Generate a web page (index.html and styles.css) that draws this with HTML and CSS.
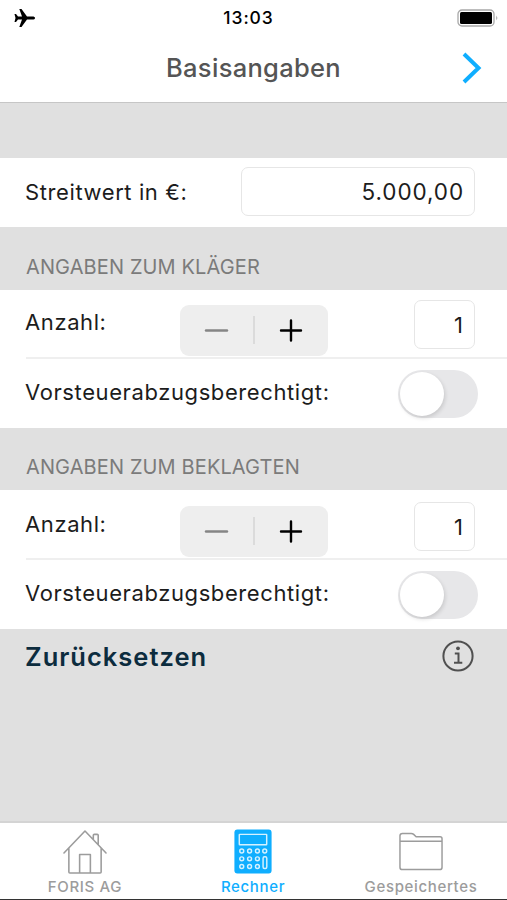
FILE: index.html
```html
<!DOCTYPE html>
<html lang="de">
<head>
  <meta charset="UTF-8" />
  <meta name="viewport" content="width=device-width, initial-scale=1.0"/>
  <title>Basisangaben</title>
  <link rel="stylesheet" href="styles.css">
</head>
<body>
  <div class="app">
    <div class="status-bar">
      <svg class="plane" width="22" height="20" viewBox="0 0 22 20">
        <path d="M21 10c0-1-1-1.500-2.500-1.500H13L7.500 1H5.300L8 8.500H4L2 6H.5L1.500 10 .5 14H2l2-2.500h4L5.300 19h2.200L13 11.500h5.500C20 11.500 21 11 21 10z"/>
      </svg>
      <span class="time">13:03</span>
      <svg class="battery" width="42" height="18" viewBox="0 0 42 18">
        <rect x="1" y="1" width="36" height="16" rx="4" fill="none" stroke="#a8a8a8" stroke-width="1.300"/>
        <rect x="3" y="3" width="32" height="12" rx="1.500"/>
        <path d="M39.500 6.500q1.600 2.500 0 5z" fill="#777"/>
      </svg>
    </div>

    <header class="nav-bar">
      <h1>Basisangaben</h1>
      <svg class="next" width="22" height="32" viewBox="0 0 22 32">
        <path d="M3 2l14.500 14L3 30" fill="none" stroke="#0faeff" stroke-width="4"/>
      </svg>
    </header>

    <main>
      <div class="row amount">
        <label>Streitwert in €:</label>
        <div class="field wide">5.000,00</div>
      </div>

      <h2 class="first">ANGABEN ZUM KLÄGER</h2>
      <div class="group">
        <div class="row count">
          <label>Anzahl:</label>
          <div class="stepper">
            <svg width="148" height="51" viewBox="0 0 148 51">
              <path d="M26 25.500h21" stroke="#858585" stroke-width="2.400" stroke-linecap="round"/>
              <path d="M74 11v28" stroke="#d5d5d5" stroke-width="1.500"/>
              <path d="M101 25.500h20M111 15.500v20" stroke="#000" stroke-width="2.400" stroke-linecap="round"/>
            </svg>
          </div>
          <div class="field small">1</div>
        </div>
        <div class="row tax">
          <label>Vorsteuerabzugsberechtigt:</label>
          <div class="toggle"><span class="knob"></span></div>
        </div>
      </div>

      <h2 class="second">ANGABEN ZUM BEKLAGTEN</h2>
      <div class="group">
        <div class="row count lower">
          <label>Anzahl:</label>
          <div class="stepper">
            <svg width="148" height="51" viewBox="0 0 148 51">
              <path d="M26 25.500h21" stroke="#858585" stroke-width="2.400" stroke-linecap="round"/>
              <path d="M74 11v28" stroke="#d5d5d5" stroke-width="1.500"/>
              <path d="M101 25.500h20M111 15.500v20" stroke="#000" stroke-width="2.400" stroke-linecap="round"/>
            </svg>
          </div>
          <div class="field small">1</div>
        </div>
        <div class="row tax">
          <label>Vorsteuerabzugsberechtigt:</label>
          <div class="toggle"><span class="knob"></span></div>
        </div>
      </div>

      <div class="reset">
        <span>Zurücksetzen</span>
        <svg width="34" height="34" viewBox="0 0 34 34" fill="none" stroke="#505050">
          <circle cx="17" cy="17" r="14.600" stroke-width="2"/>
          <circle cx="17" cy="9.300" r="1.900" fill="#505050" stroke="none"/>
          <path d="M13.800 14.500h3.700v9M13 23.800h8.300" stroke-width="2"/>
        </svg>
      </div>
    </main>

    <nav class="tab-bar">
      <div class="tab">
        <svg width="46" height="46" viewBox="0 0 46 46" fill="none" stroke="#9c9c9c" stroke-width="1.600" stroke-linejoin="round" stroke-linecap="round">
          <path d="M1.500 24.500L23 2l21.500 22.500M6.500 19.500V44a1 1 0 0 0 1 1h31a1 1 0 0 0 1-1V19.500M17.500 45V26h11v19M31.500 11V6.500a1 1 0 0 1 1-1h3a1 1 0 0 1 1 1V16"/>
        </svg>
        <span>FORIS AG</span>
      </div>
      <div class="tab active">
        <svg width="46" height="46" viewBox="0 0 46 46" fill="none" stroke="#d5f1ff" stroke-width="1.500">
          <rect x="4" y="0.500" width="38" height="45" rx="3" fill="#0faeff" stroke="none"/>
          <rect x="9" y="5.500" width="28" height="10.500" rx="0.500"/>
          <circle cx="11.500" cy="22.500" r="2"/><circle cx="19.500" cy="22.500" r="2"/><circle cx="27.500" cy="22.500" r="2"/><circle cx="35" cy="22.500" r="2"/>
          <circle cx="11.500" cy="30.500" r="2"/><circle cx="19.500" cy="30.500" r="2"/><circle cx="27.500" cy="30.500" r="2"/>
          <circle cx="11.500" cy="38.300" r="2"/><circle cx="19.500" cy="38.300" r="2"/><circle cx="27.500" cy="38.300" r="2"/>
          <rect x="33.300" y="28.300" width="3.800" height="12" rx="1.500"/>
        </svg>
        <span>Rechner</span>
      </div>
      <div class="tab">
        <svg width="46" height="46" viewBox="0 0 46 46" fill="none" stroke="#9c9c9c" stroke-width="1.500" stroke-linejoin="round">
          <path d="M1.500 39V7q0-2.500 2.500-2.500h9q1.500 0 2.500 1l2.500 2.500h24.500q2 0 2 2V39q0 2.500-2.500 2.500H4q-2.500 0-2.500-2.500zM1.500 12.500h43"/>
        </svg>
        <span>Gespeichertes</span>
      </div>
    </nav>
  </div>
</body>
</html>
```

FILE: styles.css
```css
* {
  box-sizing: border-box;
}

body {
  margin: 0;
  font-family: Inter, "Liberation Sans", sans-serif;
  font-size: 22px;
  color: #1c1c1c;
  background-color: #e0e0e0;
}

svg {
  display: block;
}

.app {
  height: 900px;
  display: flex;
  flex-direction: column;
  border-bottom: 1px solid #333;
}

.status-bar {
  display: grid;
  grid-template-columns: 1fr auto 1fr;
  align-items: center;
  height: 35px;
  padding: 0 8px 0 14px;
  background-color: white;
}

.time {
  font-size: 17.5px;
  font-weight: 500;
  letter-spacing: 0.9px;
  color: #000;
  padding-right: 16px;
}

.battery {
  justify-self: end;
}

.nav-bar {
  display: grid;
  grid-template-columns: 1fr auto 1fr;
  align-items: center;
  height: 68px;
  padding: 0 24px 2px 24px;
  background-color: white;
  border-bottom: 1px solid #c6c6c6;
}

.nav-bar h1 {
  grid-column: 2;
  margin: 0;
  font-size: 25.5px;
  font-weight: 500;
  letter-spacing: 0.3px;
  color: #555;
}

.next {
  justify-self: end;
}

main {
  flex: 1;
  padding-top: 55px;
}

.row {
  display: flex;
  justify-content: space-between;
  padding: 0 32px 0 25px;
}

.row label {
  letter-spacing: 0.6px;
}

.amount {
  height: 69px;
  padding-top: 9px;
  background-color: white;
}

.amount label {
  line-height: 50px;
}

.field {
  height: 49px;
  padding-right: 11px;
  border: 1px solid #e6e6e6;
  border-radius: 7px;
  background-color: white;
  line-height: 48px;
  text-align: right;
}

.wide {
  width: 234px;
  padding-right: 10px;
  font-size: 22.5px;
  letter-spacing: 0.9px;
}

.small {
  width: 61px;
}

h2 {
  display: flex;
  align-items: flex-end;
  margin: 0;
  padding: 0 0 10px 26px;
  font-size: 20px;
  font-weight: 400;
  letter-spacing: 0.12px;
  line-height: 25px;
  color: #7b7b7b;
}

h2.first {
  height: 63px;
}

h2.second {
  height: 62px;
}

.group {
  background-color: white;
}

.count {
  position: relative;
  height: 69px;
  padding-top: 10px;
}

.count::after {
  content: "";
  position: absolute;
  left: 26px;
  right: 0;
  bottom: 0;
  height: 2px;
  background-color: #efefef;
}

.count label {
  width: 155px;
  line-height: 44px;
}

.stepper {
  height: 51px;
  margin-top: 5px;
  margin-right: auto;
  border-radius: 9px;
  background-color: #eee;
}

.lower {
  height: 70px;
  padding-top: 12px;
}

.lower .stepper {
  margin-top: 4px;
}

.tax {
  height: 69px;
  padding: 11px 29px 0 25px;
}

.tax label {
  line-height: 45px;
}

.toggle {
  width: 80px;
  height: 48px;
  padding: 2px;
  border-radius: 24px;
  background-color: #e7e7e9;
}

.knob {
  display: block;
  width: 44px;
  height: 44px;
  border-radius: 50%;
  background-color: white;
  box-shadow: 1px 2px 4px rgba(0,0,0,0.14);
}

.reset {
  display: flex;
  justify-content: space-between;
  align-items: center;
  height: 54px;
  padding: 0 32px 0 25px;
  font-size: 25.5px;
  font-weight: 600;
  letter-spacing: 1px;
  color: #0c2c3e;
}

.tab-bar {
  display: flex;
  justify-content: space-between;
  height: 78px;
  padding: 6px 2px 0 1px;
  border-top: 2px solid #d4d4d4;
  background-color: white;
}

.tab {
  display: flex;
  flex-direction: column;
  align-items: center;
  width: 168px;
  font-size: 15px;
  font-weight: 500;
  letter-spacing: 0.65px;
  line-height: 25px;
  color: #9c9c9c;
}

.active {
  color: #0faeff;
}
```
